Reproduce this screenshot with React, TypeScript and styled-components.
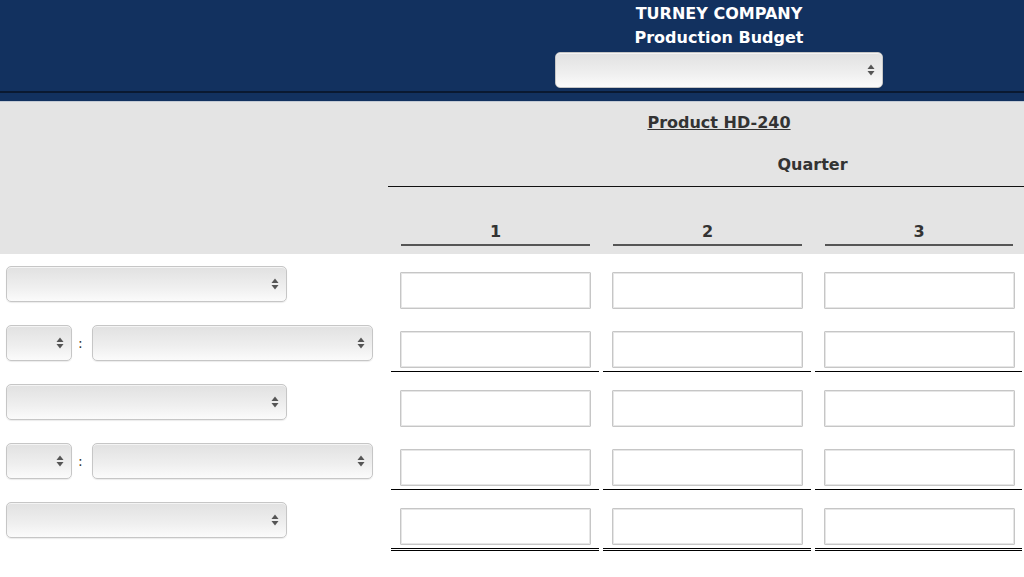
import { createGlobalStyle, styled } from 'styled-components';

const GlobalStyle = createGlobalStyle`
  html, body {
    margin: 0;
    padding: 0;
    background: #fff;
    overflow-x: hidden;
  }
  body {
    font-family: 'DejaVu Sans', Verdana, sans-serif;
  }
`;

// label column, then the quarter columns (the last one runs into the window edge)
const COLUMNS = '389px 212px 212px 211px';
const QUARTERS = [1, 2, 3];

type Rule = 'none' | 'single' | 'double';
type LineKind = 'single' | 'pair';

const rows: { kind: LineKind; rule: Rule }[] = [
  { kind: 'single', rule: 'none' },
  { kind: 'pair', rule: 'single' },
  { kind: 'single', rule: 'none' },
  { kind: 'pair', rule: 'single' },
  { kind: 'single', rule: 'double' },
];

const SelectArrows = () => (
  <svg width='8' height='12' viewBox='0 0 8 12'>
    <path d='M4 0.5 L7.5 5 L0.5 5 Z' fill='#555' />
    <path d='M4 11.5 L7.5 7 L0.5 7 Z' fill='#555' />
  </svg>
);

const App = () => {
  return (
    <PageS>
      <GlobalStyle />
      <HeaderS>
        <TitleS>TURNEY COMPANY</TitleS>
        <TitleS>Production Budget</TitleS>
        <SelectS $width={328}>
          <SelectArrows />
        </SelectS>
      </HeaderS>
      <HeaderStripS />

      <BandS>
        <ProductTitleS>
          <u>Product HD-240</u>
        </ProductTitleS>
        <GridRowS>
          <span />
          <QuarterS>Quarter</QuarterS>
        </GridRowS>
        <GridRowS>
          <span />
          {QUARTERS.map((q) => (
            <NumberS key={q}>{q}</NumberS>
          ))}
        </GridRowS>
      </BandS>

      {rows.map((row, i) => (
        <GridRowS key={i}>
          <LabelCellS>
            {row.kind === 'single' ? (
              <SelectS $width={281}>
                <SelectArrows />
              </SelectS>
            ) : (
              <>
                <SelectS $width={66}>
                  <SelectArrows />
                </SelectS>
                <ColonS>:</ColonS>
                <SelectS $width={281}>
                  <SelectArrows />
                </SelectS>
              </>
            )}
          </LabelCellS>
          {QUARTERS.map((q) => (
            <AmountCellS key={q} $rule={row.rule}>
              <AmountInputS type='text' />
            </AmountCellS>
          ))}
        </GridRowS>
      ))}
    </PageS>
  );
};

export default App;

const PageS = styled.div`
  width: 1024px;
`;

const HeaderS = styled.div`
  height: 93px;
  box-sizing: border-box;
  padding: 2px 0 0 414px;
  background: #12315f;
  border-bottom: 2px solid #0a1931;
  display: flex;
  flex-direction: column;
  align-items: center;
`;

const HeaderStripS = styled.div`
  height: 8px;
  background: #12315f;
  border-bottom: 1px solid #c3cad4;
`;

const TitleS = styled.div`
  color: #fff;
  font-weight: bold;
  font-size: 16px;
  line-height: 24px;
`;

const SelectS = styled.div<{ $width: number }>`
  width: ${(p) => p.$width}px;
  height: 36px;
  box-sizing: border-box;
  flex-shrink: 0;
  border: 1px solid #c6c6c6;
  border-radius: 5px;
  background: linear-gradient(#e1e1e1, #efefef 60%, #fbfbfb);
  box-shadow: inset 0 1px 0 #f4f4f4, 0 1px 1px rgba(0, 0, 0, 0.08);
  display: flex;
  align-items: center;
  justify-content: flex-end;
  padding-right: 7px;

  ${HeaderS} & {
    margin-top: 2px;
  }
`;

const BandS = styled.div`
  background: #e4e4e4;
  color: #333;
  font-weight: bold;
  font-size: 16px;
`;

const ProductTitleS = styled.div`
  text-align: center;
  line-height: 20px;
  padding: 11px 0 11px 414px;
`;

const GridRowS = styled.div`
  display: grid;
  grid-template-columns: ${COLUMNS};
`;

const QuarterS = styled.div`
  grid-column: 2 / span 3;
  text-align: center;
  line-height: 42px;
  padding-left: 213px;
  border-bottom: 1px solid #111;
  margin-left: -1px;
`;

const NumberS = styled.div`
  text-align: center;
  line-height: 20px;
  padding: 35px 0 2px;
  margin: 0 11px 8px 12px;
  border-bottom: 2px solid #555;
`;

const LabelCellS = styled.div`
  display: flex;
  align-items: flex-start;
  padding: 12px 0 0 6px;
  height: 59px;
  box-sizing: border-box;
`;

const ColonS = styled.span`
  width: 20px;
  box-sizing: border-box;
  padding-left: 6px;
  font-size: 14px;
  line-height: 36px;
  color: #333;
`;

const AmountCellS = styled.div<{ $rule: Rule }>`
  box-sizing: border-box;
  height: ${(p) => (p.$rule === 'double' ? 61 : 59)}px;
  margin: 0 2px;
  padding: 18px 0 0 9px;
  border-bottom: ${(p) =>
    p.$rule === 'single' ? '1px solid #000' : p.$rule === 'double' ? '3px double #000' : 'none'};
`;

const AmountInputS = styled.input`
  display: block;
  width: 191px;
  height: 37px;
  box-sizing: border-box;
  margin: 0;
  border: 1px solid #c6c6c6;
  box-shadow: inset 0 0 0 1px #e6e6e6;
  border-radius: 1px;
  background: #fff;
  outline: none;
`;
